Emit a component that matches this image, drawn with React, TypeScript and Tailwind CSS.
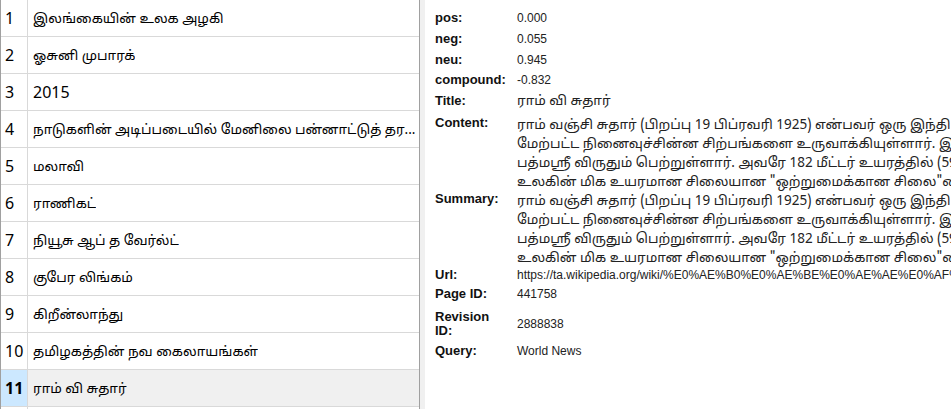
import React from "react";

const rows = [
  "இலங்கையின் உலக அழகி",
  "ஓசுனி முபாரக்",
  "2015",
  "நாடுகளின் அடிப்படையில் மேனிலை பன்னாட்டுத் தர...",
  "மலாவி",
  "ராணிகட்",
  "நியூசு ஆப் த வேர்ல்ட்",
  "குபேர லிங்கம்",
  "கிறீன்லாந்து",
  "தமிழகத்தின் நவ கைலாயங்கள்",
  "ராம் வி சுதார்",
  "",
];

const bodyLines = [
  "ராம் வஞ்சி சுதார் (பிறப்பு 19 பிப்ரவரி 1925) என்பவர் ஒரு இந்திய சிற்பி ஆவார்.",
  "மேற்பட்ட நினைவுச்சின்ன சிற்பங்களை உருவாக்கியுள்ளார். இவர் பத்ம பூசண்",
  "பத்மஸ்ரீ விருதும் பெற்றுள்ளார். அவரே 182 மீட்டர் உயரத்தில் (597 அடி)",
  "உலகின் மிக உயரமான சிலையான \"ஒற்றுமைக்கான சிலை\"யை வடிவமைத்தார்.",
];

const tamil = { fontFamily: '"Noto Sans Tamil", "Liberation Sans", sans-serif' };

function Field({
  label,
  children,
  className = "",
  center = false,
}: {
  label: React.ReactNode;
  children: React.ReactNode;
  className?: string;
  center?: boolean;
}) {
  return (
    <div className={`flex ${center ? "items-center" : "items-start"} ${className}`}>
      <div className="w-[82px] shrink-0 text-[13px] font-bold leading-[14px] text-[#111]">
        {label}
      </div>
      <div className="min-w-0 flex-1 text-[12px] leading-[14px] text-[#222]">
        {children}
      </div>
    </div>
  );
}

function Lines() {
  return (
    <div className="overflow-hidden">
      {bodyLines.map((l, i) => (
        <div
          key={i}
          className="whitespace-nowrap text-[13.5px] leading-[19px] text-[#222]"
          style={tamil}
        >
          {l}
        </div>
      ))}
    </div>
  );
}

export default function App() {
  return (
    <div className="flex h-[409px] w-[951px] overflow-hidden bg-white">
      {/* list */}
      <div
        className="w-[420px] shrink-0 overflow-hidden border-l border-r border-[#a0a0a0] bg-white"
        style={{ fontFamily: '"Noto Sans", "Noto Sans Tamil", sans-serif' }}
      >
        {rows.map((t, i) => {
          const sel = i === 10;
          return (
            <div key={i} className="flex h-[37px] border-b border-[#d9d9d9]">
              <div
                className={`flex w-[27px] shrink-0 items-center border-r border-[#d9d9d9] pl-[4px] text-[16px] text-black ${
                  sel ? "bg-[#cce8ff] font-bold" : ""
                }`}
              >
                {i < 11 ? i + 1 : ""}
              </div>
              <div
                className={`flex min-w-0 flex-1 items-center pl-[5px] text-black ${
                  sel ? "bg-[#f0f0f0]" : ""
                } ${t === "2015" ? "text-[16px]" : "text-[13.5px]"}`}
              >
                <span className="truncate">{t}</span>
              </div>
            </div>
          );
        })}
      </div>
      {/* splitter */}
      <div className="w-[5px] shrink-0 bg-[#f0f0f0]" />
      {/* details */}
      <div
        className="min-w-0 flex-1 overflow-hidden bg-white pl-[10px] pt-[11px]"
        style={{ fontFamily: '"Liberation Sans", Arial, sans-serif' }}
      >
        <div className="flex flex-col">
          <Field label="pos:" className="h-[21px]">0.000</Field>
          <Field label="neg:" className="h-[21px]">0.055</Field>
          <Field label="neu:" className="h-[20px]">0.945</Field>
          <Field label="compound:" className="h-[21px]">-0.832</Field>
          <Field label="Title:" className="h-[22px]">
            <span className="text-[13.5px]" style={tamil}>
              ராம் வி சுதார்
            </span>
          </Field>
          <Field label="Content:" className="h-[76px]">
            <Lines />
          </Field>
          <Field label="Summary:" className="h-[76px]">
            <Lines />
          </Field>
          <Field label="Url:" className="h-[19px]">
            <div className="whitespace-nowrap">
              https://ta.wikipedia.org/wiki/%E0%AE%B0%E0%AE%BE%E0%AE%AE%E0%AF%8D
            </div>
          </Field>
          <Field label="Page ID:" className="h-[21px]">441758</Field>
          <Field
            label={
              <>
                Revision
                <br />
                ID:
              </>
            }
            center
            className="h-[32px]"
          >
            2888838
          </Field>
          <Field label="Query:" className="mt-[4px] h-[21px]">World News</Field>
        </div>
      </div>
    </div>
  );
}
